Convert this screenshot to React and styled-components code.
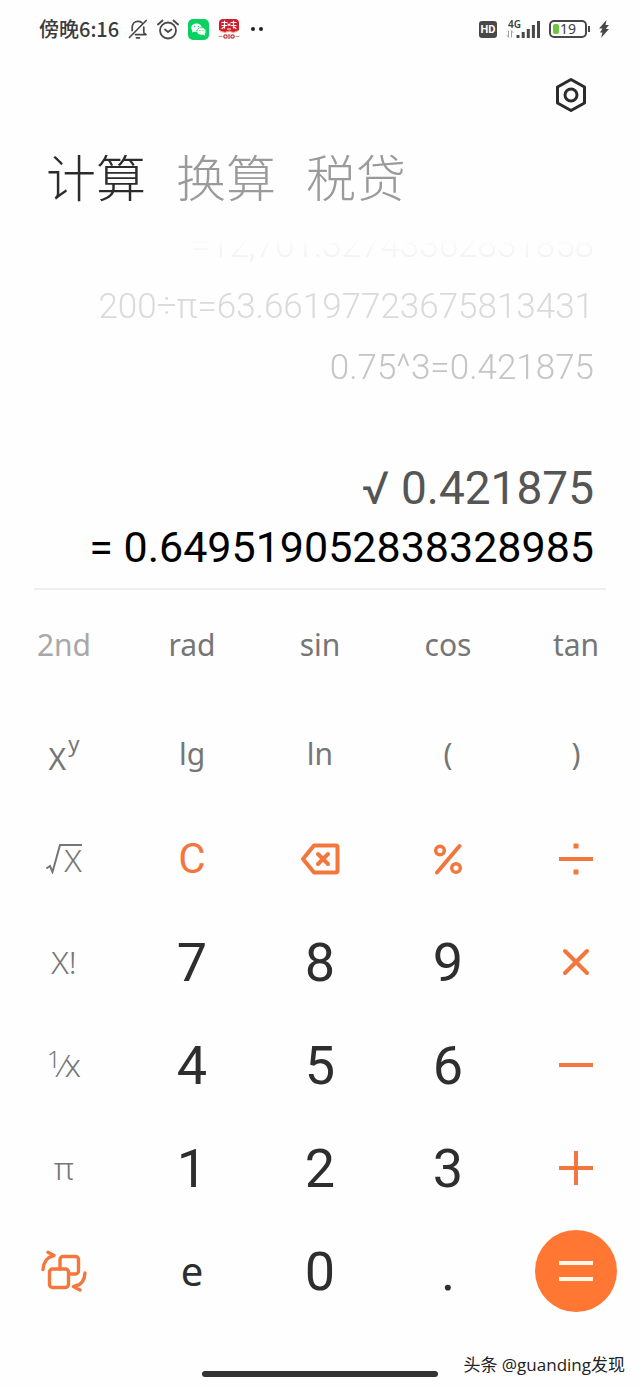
import React from "react";
import styled, { createGlobalStyle } from "styled-components";

const GlobalStyle = createGlobalStyle`
  * {
    box-sizing: border-box;
  }

  body {
    margin: 0;
    background: #fefefe;
    color: #2b2b2b;
    font-family: "Noto Sans", "Noto Sans CJK SC", sans-serif;
  }
`;

const Page = styled.main`
  display: flex;
  flex-direction: column;
  min-height: 100vh;
`;

// Status bar
const StatusBar = styled.header`
  display: flex;
  align-items: center;
  justify-content: space-between;
  height: 58px;
  padding: 0 31px 0 39px;
`;

const StatusGroup = styled.div`
  display: flex;
  align-items: center;
  gap: 9px;
`;

const Clock = styled.span`
  font-family: "Noto Sans CJK SC", sans-serif;
  font-size: 20px;
  font-weight: 500;
  line-height: 20px;
  color: #3c3c3c;
`;

const HdBadge = styled.span`
  width: 18px;
  border-radius: 3px;
  background: #484848;
  color: #fff;
  font: 700 11px/17px "Roboto", sans-serif;
  text-align: center;
`;

const Network = styled.div`
  display: grid;
  grid-template-columns: 10px 24px;
  grid-template-rows: 9px 9px;
  align-items: end;

  svg:last-child {
    grid-area: 1 / 2 / 3 / 3;
  }
`;

const NetworkLabel = styled.span`
  grid-area: 1 / 1 / 2 / 3;
  padding-left: 2px;
  font: 600 10px/9px "Noto Sans", sans-serif;
  color: #3c3c3c;
`;

const BatteryGroup = styled.span`
  display: flex;
  align-items: center;
  gap: 1px;
`;

const Battery = styled.span`
  display: flex;
  align-items: center;
  gap: 1px;
  width: 38px;
  height: 18px;
  padding: 0 2px;
  border: 2px solid #484848;
  border-radius: 5px;
  color: #3c3c3c;
  font: 400 14px/14px "Noto Sans", sans-serif;
`;

const BatteryLevel = styled.span`
  width: 6px;
  height: 10px;
  border-radius: 2px;
  background: #6cc644;
`;

const BatteryTip = styled.span`
  width: 2px;
  height: 6px;
  background: #484848;
`;

// Tabs
const TopBar = styled.div`
  display: flex;
  justify-content: flex-end;
  height: 71px;
  padding: 18px 50px 0 0;
`;

const IconButton = styled.button`
  display: grid;
  place-items: center;
  width: 38px;
  height: 38px;
  padding: 0;
  border: 0;
  background: none;
  color: #2b2b2b;
`;

const Tabs = styled.nav`
  display: flex;
  gap: 30px;
  padding: 0 46px;
`;

const Tab = styled.button`
  padding: 0;
  border: 0;
  background: none;
  color: ${({ $active }) => ($active ? "#2b2b2b" : "#9a9a9a")};
  font-family: "Noto Sans CJK SC", sans-serif;
  font-size: 50px;
  font-weight: 300;
  line-height: 92px;
`;

// Display
const History = styled.ul`
  display: flex;
  flex-direction: column;
  justify-content: flex-end;
  height: 172px;
  margin: 17px 0 0;
  padding: 0 46px 12px;
  overflow: hidden;
  list-style: none;
  mask-image: linear-gradient(transparent, #000 24px);
`;

const HistoryItem = styled.li`
  flex: none;
  color: ${({ $color }) => $color};
  font-family: "Roboto", sans-serif;
  font-size: 35px;
  font-weight: 300;
  line-height: 61px;
  text-align: right;
`;

const Display = styled.section`
  display: flex;
  flex-direction: column;
  align-items: flex-end;
  margin: 0 34px;
  padding: 48px 12px 12px;
  border-bottom: 2px solid #efefef;
  font-family: "Roboto", sans-serif;
  font-weight: 400;
`;

const Expression = styled.div`
  color: #555;
  font-size: 46px;
  line-height: 60px;
`;

const Result = styled.output`
  color: #000;
  font-size: 43px;
  line-height: 58px;
`;

// Keypad
const Keypad = styled.section`
  display: grid;
  grid-template-columns: repeat(5, 1fr);
  grid-template-rows: 109px 108px repeat(5, 103px);
`;

const Key = styled.button`
  display: flex;
  align-items: center;
  justify-content: center;
  padding: 0;
  border: 0;
  background: none;
  font-family: "Noto Sans", sans-serif;
`;

const FunctionKey = styled(Key)`
  color: ${({ $dim }) => ($dim ? "#a8a8a8" : "#767676")};
  font-size: ${({ $thin }) => ($thin ? 32 : 30)}px;
  font-weight: ${({ $thin }) => ($thin ? 300 : 400)};
`;

const DigitKey = styled(Key)`
  padding-top: 2px;
  color: #2e2e2e;
  font-family: "Roboto", sans-serif;
  font-size: 54px;
  font-weight: 400;
`;

const ConstantKey = styled(Key)`
  color: #2e2e2e;
  font-size: 40px;
`;

const OperatorKey = styled(Key)`
  color: #f3773c;
  font-family: "Roboto", sans-serif;
  font-size: 42px;
  font-weight: 400;
`;

const EqualsKey = styled(Key)`
  justify-self: center;
  align-self: center;
  width: 82px;
  height: 82px;
  border-radius: 50%;
  background: #ff7733;
  color: #fff6ee;
`;

const Base = styled.span`
  padding-top: 10px;
`;

const Power = styled.sup`
  padding: 0 0 20px 2px;
  font-size: 22px;
  line-height: 22px;
`;

const Radicand = styled.span`
  border-top: 2px solid currentColor;
  line-height: 28px;
`;

const Numerator = styled.span`
  padding-bottom: 12px;
  font-size: 24px;
`;

// Bottom bar
const BottomBar = styled.footer`
  display: grid;
  grid-template-columns: 1fr 236px 1fr;
  align-items: center;
  margin-top: auto;
  padding-bottom: 2px;
`;

const HomeIndicator = styled.div`
  grid-column: 2;
  height: 6px;
  margin-top: 18px;
  border-radius: 3px;
  background: #333;
`;

const Watermark = styled.span`
  justify-self: end;
  padding-right: 15px;
  color: #222;
  font: 400 17px/40px "Open Sans", "Noto Sans CJK SC", sans-serif;
  white-space: nowrap;
`;

const Icon = ({ width, height = width, stroke = 2, children, ...rest }) => (
  <svg
    width={width}
    height={height}
    viewBox={`0 0 ${width} ${height}`}
    fill="none"
    stroke="currentColor"
    strokeWidth={stroke}
    strokeLinecap="round"
    strokeLinejoin="round"
    aria-hidden="true"
    {...rest}
  >
    {children}
  </svg>
);

const BellOffIcon = () => (
  <Icon width={20} height={20} stroke={1.7} color="#484848">
    <path d="M4.2 11.5V8.5C4.2 4.8 6.600 2.400 10 2.400c1.600 0 2.800.4 3.800 1.200M15.800 8v5.700l2.200 2H7.500M1.400 18.500 18.200 1.500M8.500 18.800h3" />
  </Icon>
);

const AlarmIcon = () => (
  <Icon width={22} height={21} stroke={1.8} color="#484848">
    <circle cx="11" cy="11.500" r="8" />
    <path d="M8 10.500l3 2.500 3.400-2.500M1 5.500 5.500 1.500M21 5.500 16.500 1.500" />
  </Icon>
);

const WeChatIcon = () => (
  <Icon width={21} stroke={0}>
    <rect width="21" height="21" rx="5" fill="#07d160" />
    <path d="M4.500 11l-.4 2.600 2.600-1.200z" fill="#fff" />
    <ellipse cx="8.500" cy="8.700" rx="5.300" ry="4.300" fill="#fff" />
    <ellipse cx="13.500" cy="12.400" rx="4.700" ry="3.800" fill="#fff" stroke="#07d160" strokeWidth="0.8" />
    <path d="M15 15.400l2.200 1.300-.4-2.400z" fill="#fff" />
    <g fill="#07d160">
      <circle cx="6.700" cy="7.500" r="0.700" />
      <circle cx="10.300" cy="7.500" r="0.700" />
      <circle cx="12" cy="11.600" r="0.600" />
      <circle cx="15" cy="11.600" r="0.600" />
    </g>
  </Icon>
);

const ShopIcon = () => (
  <Icon width={22} stroke={1.2}>
    <path d="M1 12V5c0-2.500 1.500-4 4-4h12c2.500 0 4 1.500 4 4v7l-4 2H5z" fill="#cf1f2e" stroke="none" />
    <path d="M4 4.500h5M6.500 3v7M4 7.500h5M4 10.500l2-1.500M13 4.500h5M15.500 3v7M13 7.500h5M18 10.500l-2-1.500M10 6l1 1.500L12 6M9.500 11h3" stroke="#fff" />
    <path d="M3 13.500l4 1 4-1.500 4 1.500 4-1" stroke="#f3a86f" />
    <path d="M1 18.500h3M18 18.500h3" stroke="#d98a86" />
    <circle cx="7.500" cy="18.500" r="1.700" stroke="#b8323a" />
    <path d="M11 16.500v4" stroke="#b8323a" />
    <circle cx="14.500" cy="18.500" r="1.700" stroke="#b8323a" />
  </Icon>
);

const MoreIcon = () => (
  <Icon width={16} height={6} stroke={0}>
    <circle cx="4" cy="3" r="2" fill="#222" />
    <circle cx="12" cy="3" r="2" fill="#222" />
  </Icon>
);

const DataArrowsIcon = () => (
  <Icon width={8} height={8} stroke={1} color="#a0a0a0">
    <path d="M2.500 1v6M1 5.500 2.500 7M5.500 7V1M7 2.500 5.500 1" />
  </Icon>
);

const SignalIcon = () => (
  <Icon width={24} height={18} stroke={3} strokeLinecap="butt" color="#484848">
    <path d="M2 18v-3M7.200 18v-6M12.300 18V9M17.400 18V5M22.500 18V1" />
  </Icon>
);

const BoltIcon = () => (
  <Icon width={10} height={18} stroke={1}>
    <path d="M7.500 0 0 8.500h3.500L1 12.500h2.500L2 18l8-9H6.800L9.800 5H6.500z" fill="#484848" stroke="none" />
  </Icon>
);

const SettingsIcon = () => (
  <Icon width={34} height={36} stroke={3}>
    <path d="M17 2.500 30.500 10v16L17 33.500 3.500 26V10z" />
    <circle cx="17" cy="18" r="6" />
  </Icon>
);

const RadicalIcon = () => (
  <Icon width={18} height={30} stroke={2} strokeLinejoin="miter">
    <path d="M1 24l3-2 2.500 6L14 1h4" />
  </Icon>
);

const BackspaceIcon = () => (
  <Icon width={40} height={32} stroke={4}>
    <path d="M14 2.500h22a1.500 1.500 0 0 1 1.500 1.500v24a1.500 1.500 0 0 1-1.500 1.500H14L3 16z" />
    <path d="M18 11l10 10M28 11 18 21" />
  </Icon>
);

const PercentIcon = () => (
  <Icon width={30} height={32} stroke={3.5}>
    <circle cx="7" cy="7.500" r="4.300" />
    <circle cx="23" cy="25" r="4.300" />
    <path d="M26.500 3 4 29.500" strokeWidth="4" />
  </Icon>
);

const DivideIcon = () => (
  <Icon width={34} height={32} stroke={4} strokeLinecap="butt">
    <path d="M0 16h34" />
    <path d="M17 .5v5M17 26.500v5" strokeWidth="5" />
  </Icon>
);

const TimesIcon = () => (
  <Icon width={28} height={28} stroke={4}>
    <path d="M3 3l22 22M25 3 3 25" />
  </Icon>
);

const MinusIcon = () => (
  <Icon width={34} height={34} stroke={4} strokeLinecap="butt">
    <path d="M0 17h34" />
  </Icon>
);

const PlusIcon = () => (
  <Icon width={34} height={34} stroke={4} strokeLinecap="butt">
    <path d="M0 17h34M17 0v34" />
  </Icon>
);

const EqualsIcon = () => (
  <Icon width={34} height={22} stroke={4} strokeLinecap="butt">
    <path d="M0 3h34M0 19h34" />
  </Icon>
);

const RotateIcon = () => (
  <Icon width={46} height={42} stroke={3.4}>
    <rect x="8.500" y="19" width="19" height="18.500" rx="3" />
    <path d="M19 19V9.500a3 3 0 0 1 3-3h12.500a3 3 0 0 1 3 3V21a3 3 0 0 1-3 3H28" />
    <path d="M2 19.500C2.500 12.500 5.500 7.500 12 5.500M7 2.200l6 3.300-3.500 1.500M44 23c-.3 7-4 12-10.500 14M39 40 32.500 36.500l4-1.500" />
  </Icon>
);

const history = [
  { text: "=12,701.32743362831858", color: "#efefef" },
  { text: "200÷π=63.66197723675813431", color: "#dadada" },
  { text: "0.75^3=0.421875", color: "#c4c4c4" },
];

const tabs = ["计算", "换算", "税贷"];

const App = () => {
  return (
    <>
      <GlobalStyle />
      <Page>
        <StatusBar>
          <StatusGroup>
            <Clock>傍晚6:16</Clock>
            <BellOffIcon />
            <AlarmIcon />
            <WeChatIcon />
            <ShopIcon />
            <MoreIcon />
          </StatusGroup>
          <StatusGroup>
            <HdBadge>HD</HdBadge>
            <Network>
              <NetworkLabel>4G</NetworkLabel>
              <DataArrowsIcon />
              <SignalIcon />
            </Network>
            <BatteryGroup>
              <Battery>
                <BatteryLevel />
                19
              </Battery>
              <BatteryTip />
            </BatteryGroup>
            <BoltIcon />
          </StatusGroup>
        </StatusBar>

        <TopBar>
          <IconButton aria-label="设置">
            <SettingsIcon />
          </IconButton>
        </TopBar>

        <Tabs>
          {tabs.map((tab, index) => (
            <Tab key={tab} $active={index === 0}>
              {tab}
            </Tab>
          ))}
        </Tabs>

        <History>
          {history.map((item) => (
            <HistoryItem key={item.text} $color={item.color}>
              {item.text}
            </HistoryItem>
          ))}
        </History>

        <Display>
          <Expression>√ 0.421875</Expression>
          <Result>= 0.649519052838328985</Result>
        </Display>

        <Keypad>
          <FunctionKey $dim>2nd</FunctionKey>
          <FunctionKey>rad</FunctionKey>
          <FunctionKey>sin</FunctionKey>
          <FunctionKey>cos</FunctionKey>
          <FunctionKey>tan</FunctionKey>

          <FunctionKey>
            <Base>X</Base>
            <Power>y</Power>
          </FunctionKey>
          <FunctionKey>lg</FunctionKey>
          <FunctionKey>ln</FunctionKey>
          <FunctionKey>(</FunctionKey>
          <FunctionKey>)</FunctionKey>

          <FunctionKey $thin>
            <RadicalIcon />
            <Radicand>X</Radicand>
          </FunctionKey>
          <OperatorKey>C</OperatorKey>
          <OperatorKey aria-label="backspace">
            <BackspaceIcon />
          </OperatorKey>
          <OperatorKey aria-label="percent">
            <PercentIcon />
          </OperatorKey>
          <OperatorKey aria-label="divide">
            <DivideIcon />
          </OperatorKey>

          <FunctionKey $thin>X!</FunctionKey>
          <DigitKey>7</DigitKey>
          <DigitKey>8</DigitKey>
          <DigitKey>9</DigitKey>
          <OperatorKey aria-label="multiply">
            <TimesIcon />
          </OperatorKey>

          <FunctionKey $thin>
            <Numerator>1</Numerator>⁄<span>x</span>
          </FunctionKey>
          <DigitKey>4</DigitKey>
          <DigitKey>5</DigitKey>
          <DigitKey>6</DigitKey>
          <OperatorKey aria-label="subtract">
            <MinusIcon />
          </OperatorKey>

          <FunctionKey $thin>π</FunctionKey>
          <DigitKey>1</DigitKey>
          <DigitKey>2</DigitKey>
          <DigitKey>3</DigitKey>
          <OperatorKey aria-label="add">
            <PlusIcon />
          </OperatorKey>

          <OperatorKey aria-label="switch layout">
            <RotateIcon />
          </OperatorKey>
          <ConstantKey>e</ConstantKey>
          <DigitKey>0</DigitKey>
          <DigitKey>.</DigitKey>
          <EqualsKey aria-label="equals">
            <EqualsIcon />
          </EqualsKey>
        </Keypad>

        <BottomBar>
          <HomeIndicator />
          <Watermark>头条 @guanding发现</Watermark>
        </BottomBar>
      </Page>
    </>
  );
};

export default App;
